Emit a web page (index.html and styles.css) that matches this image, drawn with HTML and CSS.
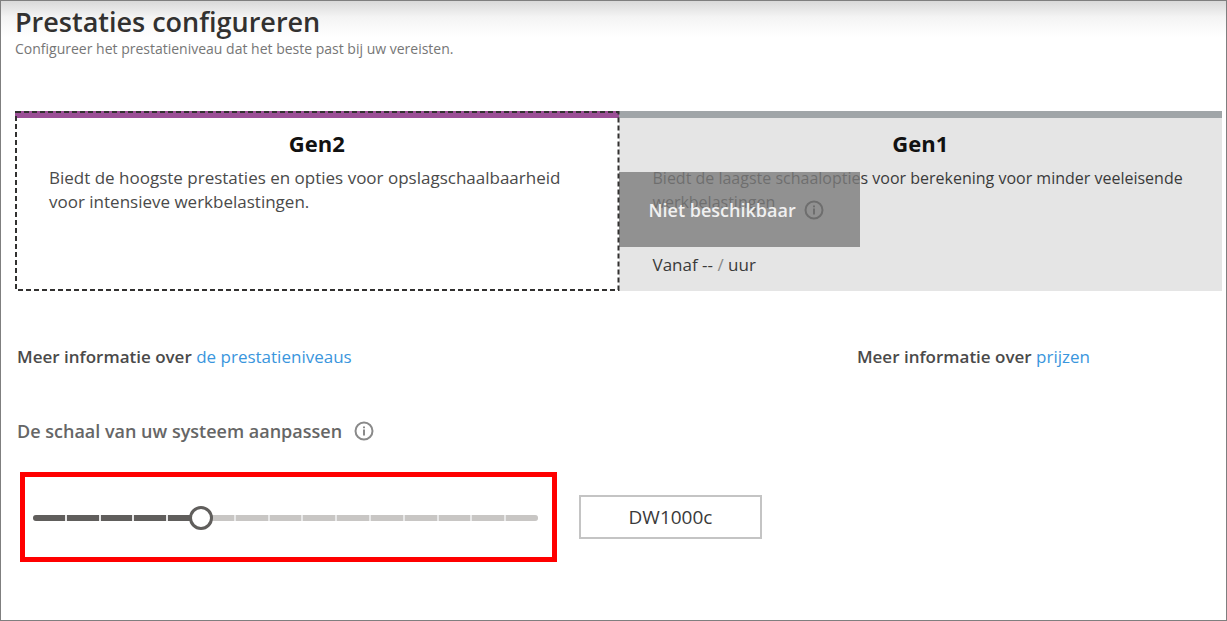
FILE: index.html
```html
<!DOCTYPE html>
<html lang="nl">
<head>
<meta charset="utf-8">
<meta name="viewport" content="width=device-width, initial-scale=1">
<title>Prestaties configureren</title>
<link rel="stylesheet" href="styles.css">
</head>
<body>
<main class="page">
  <header class="page-header">
    <h1 class="title">Prestaties configureren</h1>
    <p class="subtitle">Configureer het prestatieniveau dat het beste past bij uw vereisten.</p>
  </header>

  <section class="tiers">
    <article class="tier tier-selected">
      <svg class="outline" aria-hidden="true"><rect x="1" y="1" width="100%" height="100%"/></svg>
      <h2 class="tier-name">Gen2</h2>
      <p class="tier-text">Biedt de hoogste prestaties en opties voor opslagschaalbaarheid voor intensieve werkbelastingen.</p>
    </article>
    <article class="tier tier-disabled">
      <h2 class="tier-name">Gen1</h2>
      <p class="tier-text">Biedt de laagste schaalopties voor berekening voor minder veeleisende werkbelastingen</p>
      <p class="tier-price">Vanaf -- <span class="slash">/</span> uur</p>
      <div class="unavailable">
        <span>Niet beschikbaar</span>
        <svg class="info" viewBox="0 0 20 20" aria-hidden="true"><circle cx="10" cy="10" r="8.5"/><path d="M10 8.500v6M10 5.500v1.800"/></svg>
      </div>
    </article>
  </section>

  <section class="more">
    <p class="more-item">Meer informatie over <a class="link" href="#niveaus">de prestatieniveaus</a></p>
    <p class="more-item">Meer informatie over <a class="link" href="#prijzen">prijzen</a></p>
  </section>

  <section class="scale">
    <div class="scale-heading">
      <label class="scale-label" for="scale">De schaal van uw systeem aanpassen</label>
      <svg class="info" viewBox="0 0 20 20" aria-hidden="true"><circle cx="10" cy="10" r="8.5"/><path d="M10 8.500v6M10 5.500v1.800"/></svg>
    </div>
    <div class="scale-row">
      <div class="highlight">
        <div class="slider">
          <div class="track">
            <i class="on"></i><i class="on"></i><i class="on"></i><i class="on"></i><i class="on"></i><i></i><i></i><i></i><i></i><i></i><i></i><i></i><i></i><i></i><i></i>
          </div>
          <input class="range" id="scale" type="range" min="0" max="15" value="5">
        </div>
      </div>
      <input class="value" type="text" value="DW1000c" aria-label="Prestatieniveau">
    </div>
  </section>
</main>
</body>
</html>
```
FILE: styles.css
```css
* {
  box-sizing: border-box;
}

body {
  margin: 0;
  font-family: "Open Sans", "Noto Sans", sans-serif;
  font-size: 17px;
  line-height: 24px;
  color: #4a4a4a;
  background: #fff;
}

h1, h2, p {
  margin: 0;
}

.page {
  min-height: 100vh;
  padding: 4px 4px 24px 14px;
  border: 1px solid #7f7f7f;
  background: linear-gradient(#d9d9d9, #f4f4f4 16px, #fff 36px);
}

.title {
  font-size: 27px;
  line-height: 34px;
  font-weight: 600;
  color: #323130;
}

.subtitle {
  font-size: 14px;
  line-height: 20px;
  color: #767676;
}

.tiers {
  display: grid;
  grid-template-columns: 1fr 1fr;
  margin-top: 52px;
}

.tier {
  position: relative;
  min-height: 180px;
  padding: 18px 0 10px;
}

.tier-selected {
  z-index: 1;
  background-image: linear-gradient(#9b4f96 7px, #fff 7px);
}

.outline {
  position: absolute;
  top: 0;
  left: 0;
  width: calc(100% - 1px);
  height: calc(100% - 2px);
  overflow: visible;
  fill: none;
  stroke: #323130;
  stroke-width: 2;
  stroke-dasharray: 5 3;
}

.tier-disabled {
  background-image: linear-gradient(#a0a5a8 7px, #e5e5e5 7px);
}

.tier-name {
  font-size: 22px;
  line-height: 28px;
  font-weight: 700;
  text-align: center;
  color: #111;
}

.tier-text {
  margin-top: 9px;
  padding: 0 24px 0 34px;
}

.tier-disabled .tier-text {
  font-size: 16px;
}

.tier-disabled .tier-text,
.tier-price {
  color: #3a3a3a;
}

.tier-price {
  margin-top: 39px;
  padding-left: 34px;
}

.slash {
  color: #8a8a8a;
}

.unavailable {
  position: absolute;
  top: 61px;
  left: 0;
  display: flex;
  align-items: center;
  gap: 8px;
  width: 241px;
  height: 75px;
  padding-left: 30px;
  font-size: 18px;
  font-weight: 600;
  color: #f0f0f0;
  background: rgba(124, 124, 124, 0.8);
}

.info {
  width: 20px;
  height: 20px;
  fill: none;
  stroke: #8a8a8a;
  stroke-width: 2;
}

.unavailable .info {
  stroke: #6e6e6e;
}

.more {
  display: grid;
  grid-template-columns: 842fr 366fr;
  margin-top: 54px;
  padding-left: 2px;
}

.more-item {
  font-weight: 600;
}

.link {
  font-weight: 400;
  color: #3a96dd;
  text-decoration: none;
}

.scale {
  margin-top: 50px;
  padding-left: 2px;
}

.scale-heading {
  display: flex;
  align-items: center;
  gap: 12px;
}

.scale-label {
  font-size: 18px;
  font-weight: 600;
  color: #666;
}

.scale-row {
  display: flex;
  align-items: center;
  gap: 22px;
  margin-top: 29px;
  padding-left: 3px;
}

.highlight {
  width: 537px;
  padding: 29px 14px 27px 8px;
  border: 5px solid #f00;
}

.slider {
  position: relative;
  display: flex;
  align-items: center;
  height: 24px;
}

.track {
  display: flex;
  flex: 1;
  gap: 2px;
  height: 6px;
  overflow: hidden;
  border-radius: 3px;
  background: #e8e8e8;
}

.track i {
  flex: 1;
  background: #c8c6c4;
}

.track .on {
  background: #605e5c;
}

.range {
  position: absolute;
  left: -12px;
  width: calc(100% + 24px);
  height: 24px;
  margin: 0;
  appearance: none;
  background: transparent;
}

.range::-webkit-slider-thumb {
  appearance: none;
  width: 24px;
  height: 24px;
  border: 3px solid #605e5c;
  border-radius: 50%;
  background: #fff;
}

.value {
  width: 183px;
  height: 44px;
  border: 2px solid #c4c4c4;
  font: inherit;
  font-size: 19px;
  text-align: center;
  color: #3a3a3a;
  background: #fff;
}
```
